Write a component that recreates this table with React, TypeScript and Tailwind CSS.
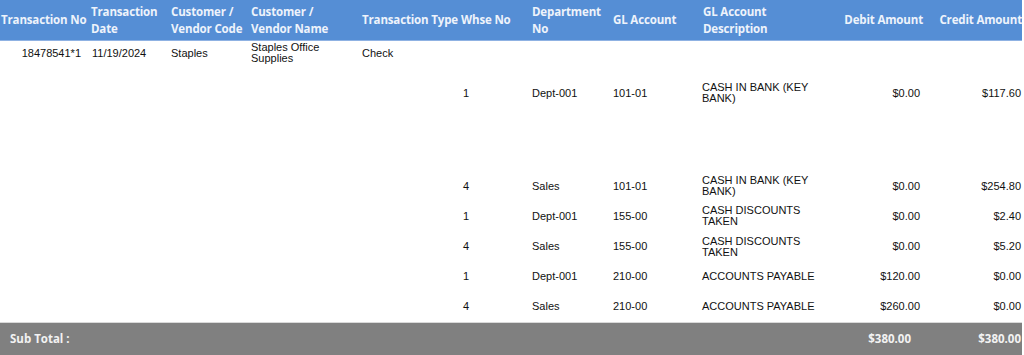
const head = "font-['Open_Sans',sans-serif] font-bold text-[11.5px] leading-[17px] tracking-[-0.15px] text-[#eef3fb]";
const body = "font-['Liberation_Sans',Arial,sans-serif] text-[11px] leading-[11px] text-[#111]";

type Line = {
  whse: string;
  dept: string;
  gl: string;
  desc: string;
  debit: string;
  credit: string;
  h: string;
};

const lines: Line[] = [
  { whse: "1", dept: "Dept-001", gl: "101-01", desc: "CASH IN BANK (KEY BANK)", debit: "$0.00", credit: "$117.60", h: "h-[54px]" },
  { whse: "4", dept: "Sales", gl: "101-01", desc: "CASH IN BANK (KEY BANK)", debit: "$0.00", credit: "$254.80", h: "h-[30px]" },
  { whse: "1", dept: "Dept-001", gl: "155-00", desc: "CASH DISCOUNTS TAKEN", debit: "$0.00", credit: "$2.40", h: "h-[30px]" },
  { whse: "4", dept: "Sales", gl: "155-00", desc: "CASH DISCOUNTS TAKEN", debit: "$0.00", credit: "$5.20", h: "h-[31px]" },
  { whse: "1", dept: "Dept-001", gl: "210-00", desc: "ACCOUNTS PAYABLE", debit: "$120.00", credit: "$0.00", h: "h-[29px]" },
  { whse: "4", dept: "Sales", gl: "210-00", desc: "ACCOUNTS PAYABLE", debit: "$260.00", credit: "$0.00", h: "h-[31px]" },
];

export default function App() {
  return (
    <div className="h-[355px] w-[1024px] overflow-hidden bg-white">
      <table className="w-[1022px] table-fixed border-collapse">
        <colgroup>
          <col className="w-[90px]" />
          <col className="w-[78px]" />
          <col className="w-[80px]" />
          <col className="w-[110px]" />
          <col className="w-[100px]" />
          <col className="w-[70px]" />
          <col className="w-[82px]" />
          <col className="w-[90px]" />
          <col className="w-[126px]" />
          <col className="w-[100px]" />
          <col className="w-[96px]" />
        </colgroup>
        <thead>
          <tr className={`h-[40px] border-b border-[#8fb2e3] bg-[#558ed5] text-left align-middle ${head}`}>
            <th className="pl-px whitespace-nowrap">Transaction No</th>
            <th className="pl-px">Transaction Date</th>
            <th className="pl-[3px]">Customer / Vendor Code</th>
            <th className="pl-[3px] pr-[25px]">Customer / Vendor Name</th>
            <th className="pl-[4px] whitespace-nowrap">Transaction Type</th>
            <th className="pl-[3px] whitespace-nowrap">Whse No</th>
            <th className="pl-[4px]">Department No</th>
            <th className="pl-[3px]">GL Account</th>
            <th className="pl-[3px] pr-[40px]">GL Account Description</th>
            <th className="pr-[3px] text-right">Debit Amount</th>
            <th className="text-right whitespace-nowrap">Credit Amount</th>
          </tr>
        </thead>
        <tbody className={body}>
          <tr className="h-[26px] align-middle">
            <td className="pr-[9px] text-right">18478541*1</td>
            <td className="pl-[2px]">11/19/2024</td>
            <td className="pl-[3px]">Staples</td>
            <td className="pl-[3px] pr-[30px]">Staples Office Supplies</td>
            <td className="pl-[4px]">Check</td>
            <td colSpan={6}></td>
          </tr>
          {lines.map((l, i) => (
            <>
              <tr key={i} className={`${l.h} align-middle`}>
                <td colSpan={5}></td>
                <td className="pl-[5px]">{l.whse}</td>
                <td className="pl-[4px]">{l.dept}</td>
                <td className="pl-[3px]">{l.gl}</td>
                <td className="pl-[2px] pr-[4px]">{l.desc}</td>
                <td className="pr-[6px] text-right">{l.debit}</td>
                <td className="pr-px text-right">{l.credit}</td>
              </tr>
              {i === 0 && (
                <tr key="gap" className="h-[51px]">
                  <td colSpan={11}></td>
                </tr>
              )}
            </>
          ))}
          <tr className="h-[33px] border-y border-[#d9d9d9] bg-[#808080] align-middle font-['Open_Sans',sans-serif] text-[11.5px] font-bold text-[#f2f2f2]">
            <td colSpan={9} className="pl-[10px]">Sub Total :</td>
            <td className="pr-[15px] text-right">$380.00</td>
            <td className="pr-px text-right">$380.00</td>
          </tr>
        </tbody>
      </table>
    </div>
  );
}
